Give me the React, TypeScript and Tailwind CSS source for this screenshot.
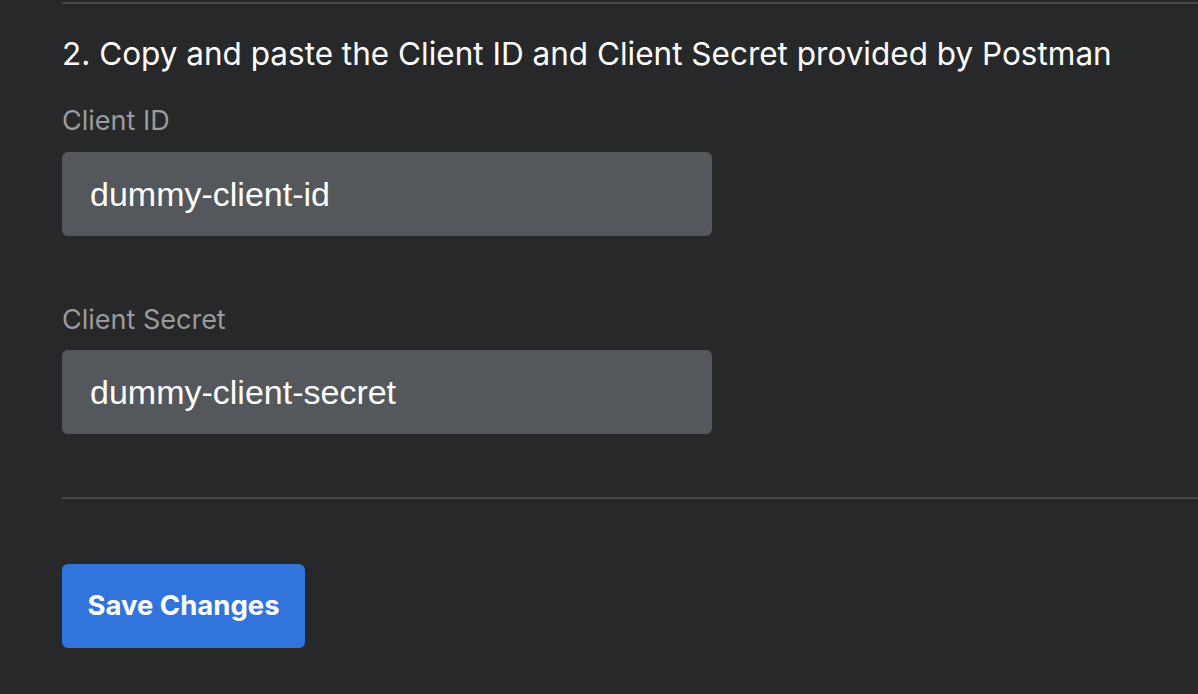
export default function App() {
  return (
    <div className="w-[1198px] h-[694px] bg-[#27282a] overflow-hidden" style={{ fontFamily: 'Inter, "Liberation Sans", sans-serif' }}>
      <div className="pl-[62px]">
        <div className="h-[2px] bg-[#45484d] mt-[2px]" />
        <h2 className="mt-[31px] text-[31.5px] leading-[38px] text-white">
          2. Copy and paste the Client ID and Client Secret provided by Postman
        </h2>
        <div className="mt-[32px] text-[27px] leading-[32px] text-[#9a9b9d]">Client ID</div>
        <div className="mt-[15px] w-[650px] h-[84px] rounded-[6px] bg-[#54575c] flex items-center pl-[28px] text-[34px] text-white" style={{ fontFamily: '"Liberation Sans", Arial, sans-serif' }}>
          dummy-client-id
        </div>
        <div className="mt-[68px] text-[27px] leading-[32px] text-[#9a9b9d]">Client Secret</div>
        <div className="mt-[14px] w-[650px] h-[84px] rounded-[6px] bg-[#54575c] flex items-center pl-[28px] text-[34px] text-white" style={{ fontFamily: '"Liberation Sans", Arial, sans-serif' }}>
          dummy-client-secret
        </div>
        <div className="mt-[63px] h-[2px] bg-[#45484d]" />
        <button className="mt-[65px] w-[243px] h-[84px] rounded-[6px] bg-[#3174dc] text-white text-[27.5px] font-bold">
          Save Changes
        </button>
      </div>
    </div>
  );
}
